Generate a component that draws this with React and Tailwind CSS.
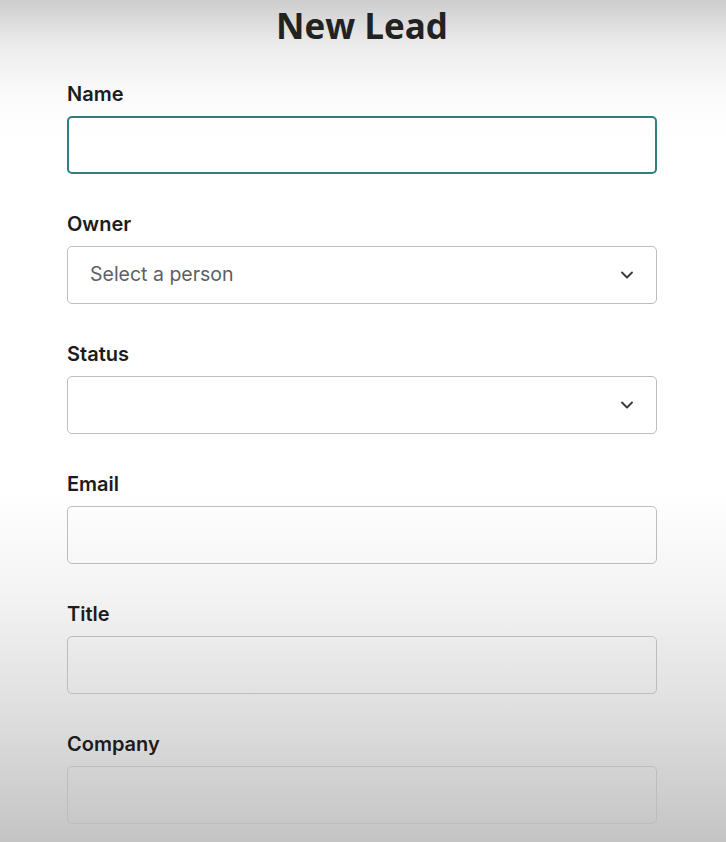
import { ChevronDown } from 'lucide-react';

const fields = [
  { label: 'Name', kind: 'input', focused: true },
  { label: 'Owner', kind: 'select', placeholder: 'Select a person' },
  { label: 'Status', kind: 'select' },
  { label: 'Email', kind: 'input' },
  { label: 'Title', kind: 'input' },
  { label: 'Company', kind: 'input' },
];

function Field({ label, kind, placeholder, focused }) {
  const border = focused ? 'border-2 border-[#2f7f80]' : 'border border-[#bdbdbd]';
  return (
    <div className="flex flex-col">
      <label className="mb-[10px] text-[20px] font-semibold leading-[24px] text-[#1c1c1c]">{label}</label>
      {kind === 'select' ? (
        <div className={`flex h-[58px] items-center justify-between rounded-[5px] bg-transparent pl-[22px] pr-[19px] ${border}`}>
          <span className="text-[19.5px] text-[#5d5f63]">{placeholder || ''}</span>
          <ChevronDown className="h-[20px] w-[20px] text-[#3a3a3a]" strokeWidth={2.25} />
        </div>
      ) : (
        <input type="text" className={`h-[58px] w-full rounded-[5px] bg-transparent px-[22px] text-[19px] outline-none ${border}`} />
      )}
    </div>
  );
}

export default function App() {
  return (
    <div
      className="min-h-[842px] w-full bg-[linear-gradient(to_bottom,#cdcdcd_0px,#ececec_45px,#fbfbfb_95px,#ffffff_140px,#ffffff_490px,#f4f4f4_590px,#dfdfdf_710px,#c4c4c4_842px)]"
      style={{ fontFamily: 'Inter, "Noto Sans", sans-serif' }}
    >
      <div className="px-[67px] pr-[69px]">
        <h1
          className="text-center text-[35px] leading-[52px] text-[#222]"
          style={{ fontFamily: '"Open Sans", "Noto Sans", sans-serif', fontWeight: 700 }}
        >
          New Lead
        </h1>
        <div className="mt-[30px] flex flex-col gap-[38px]">
          {fields.map((f) => (
            <Field key={f.label} {...f} />
          ))}
        </div>
      </div>
    </div>
  );
}
